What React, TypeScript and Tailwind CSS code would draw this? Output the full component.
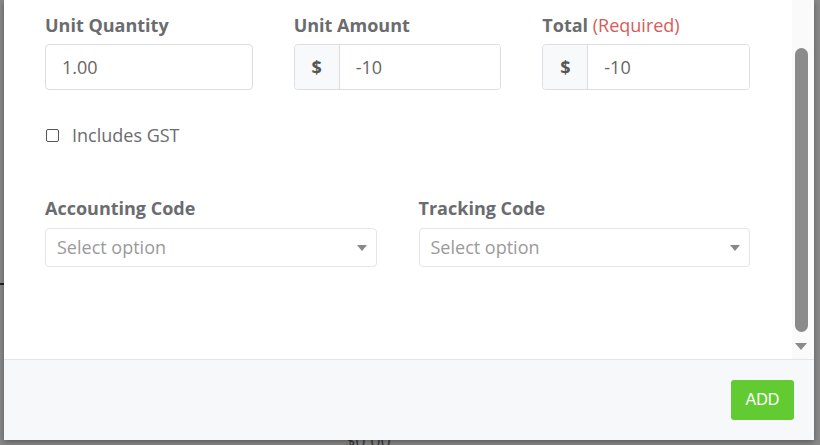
import { Fragment } from "react";

const font = { fontFamily: '"Open Sans", "Liberation Sans", sans-serif' };

function Label({ children }: { children: React.ReactNode }) {
    return (
        <div className="text-[18px] leading-[24px] font-bold text-[#6a6c6f]">
            {children}
        </div>
    );
}

function PrefixInput({ value }: { value: string }) {
    return (
        <div className="flex h-[46px] rounded-[4px] border border-[#dcdde0] overflow-hidden">
            <div className="w-[45px] flex items-center justify-center bg-[#f8f9fa] border-r border-[#dcdde0] text-[18px] font-bold text-[#555]">
                $
            </div>
            <div className="flex-1 flex items-center pl-[16px] text-[18px] text-[#666] bg-white">
                {value}
            </div>
        </div>
    );
}

function SelectBox() {
    return (
        <div className="flex h-[39px] items-center justify-between rounded-[4px] border border-[#e4e5e7] pl-[11px] pr-[9px] bg-white">
            <span className="text-[18px] text-[#9a9a9a]">Select option</span>
            <svg width="10" height="6" viewBox="0 0 10 6" className="mt-[1px]">
                <path d="M0 0 L10 0 L5 6 Z" fill="#888" />
            </svg>
        </div>
    );
}

export default function App() {
    return (
        <div className="relative w-[820px] h-[445px] overflow-hidden bg-[#898989]" style={font}>
            {/* page behind the overlay */}
            <div className="absolute left-[345px] top-[427px] text-[18px] text-[#3a3a3a]">$0.00</div>
            <div className="absolute left-0 top-[283px] w-[4px] h-[2px] bg-[#222]" />

            {/* modal */}
            <div className="absolute left-[4px] top-0 w-[810px] h-[440px] bg-white shadow-[0_2px_6px_rgba(0,0,0,0.35)] flex flex-col">
                <div className="flex h-[359px]">
                    <div className="flex-1 pl-[41px] pr-[42px] pt-[13px]">
                        <div className="grid grid-cols-3 gap-x-[41px]">
                            <div>
                                <Label>Unit Quantity</Label>
                                <div className="mt-[7px] h-[46px] rounded-[4px] border border-[#dcdde0] flex items-center pl-[16px] text-[18px] text-[#666]">
                                    1.00
                                </div>
                            </div>
                            <div>
                                <Label>Unit Amount</Label>
                                <div className="mt-[7px]">
                                    <PrefixInput value="-10" />
                                </div>
                            </div>
                            <div>
                                <Label>
                                    Total <span className="font-normal text-[#d65b5b]">(Required)</span>
                                </Label>
                                <div className="mt-[7px]">
                                    <PrefixInput value="-10" />
                                </div>
                            </div>
                        </div>

                        <label className="mt-[33px] flex items-center gap-[13px] text-[18px] leading-[24px] text-[#6a6c6f]">
                            <span className="ml-[1px] w-[13px] h-[13px] rounded-[2px] border border-[#555] bg-white" />
                            Includes GST
                        </label>

                        <div className="mt-[49px] grid grid-cols-2 gap-x-[42px]">
                            {["Accounting Code", "Tracking Code"].map((l) => (
                                <Fragment key={l}>
                                    <div>
                                        <Label>{l}</Label>
                                        <div className="mt-[8px]">
                                            <SelectBox />
                                        </div>
                                    </div>
                                </Fragment>
                            ))}
                        </div>
                    </div>

                    {/* scrollbar */}
                    <div className="w-[22px] bg-[#fafafa] flex flex-col items-center pl-[2px] pr-[6px]">
                        <div className="mt-[48px] w-[13px] h-[284px] rounded-full bg-[#8b8b8b]" />
                        <svg width="12" height="7" viewBox="0 0 12 7" className="mt-[11px]">
                            <path d="M0 0 L12 0 L6 7 Z" fill="#8b8b8b" />
                        </svg>
                    </div>
                </div>

                <div className="flex-1 border-t border-[#e4e5e7] bg-[#f7f8fa] flex justify-end items-start pt-[20px] pr-[20px]">
                    <button
                        className="w-[63px] h-[40px] rounded-[3px] bg-[#62cb31] text-white text-[16px]"
                        style={{ fontFamily: '"Liberation Sans", Arial, sans-serif' }}
                    >
                        ADD
                    </button>
                </div>
            </div>
        </div>
    );
}
